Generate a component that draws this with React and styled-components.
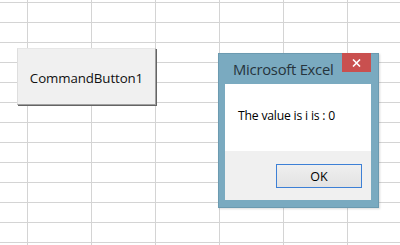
import React from "react";
import styled, { createGlobalStyle } from "styled-components";

const Global = createGlobalStyle`
  html, body { margin: 0; padding: 0; background: #ffffff; }
  body { font-family: "Open Sans", "Noto Sans", "Liberation Sans", sans-serif; }
`;

const Sheet = styled.div`
  position: relative;
  width: 400px;
  height: 245px;
  overflow: hidden;
  background-color: #ffffff;
  background-image:
    linear-gradient(to right, #d4d4d4 1px, transparent 1px),
    linear-gradient(to bottom, #d4d4d4 1px, transparent 1px);
  background-size: 64px 20px;
  background-position: 27px 2px;
`;

const CommandButton = styled.button`
  position: absolute;
  left: 17px;
  top: 48px;
  width: 139px;
  height: 57px;
  box-sizing: border-box;
  margin: 0;
  padding: 0;
  background: #f0f0f0;
  border-top: 1px solid #e6e6e6;
  border-left: 1px solid #dedede;
  border-right: 1px solid #a0a0a0;
  border-bottom: 1px solid #a0a0a0;
  box-shadow: 1px 1px 0 #646464;
  font-family: "Open Sans", "Noto Sans", sans-serif;
  font-size: 13.3px;
  color: #111;
  display: flex;
  align-items: center;
  justify-content: center;
  padding-top: 2px;
  letter-spacing: -0.1px;
`;

const Dialog = styled.div`
  position: absolute;
  left: 218px;
  top: 53px;
  width: 161px;
  height: 155px;
  box-sizing: border-box;
  background: #7aaac0;
  border: 1px solid #6b9ab0;
  display: flex;
  flex-direction: column;
  padding: 0 7px 7px 6px;
  box-shadow: 1px 1px 2px rgba(0,0,0,0.15);
`;

const TitleBar = styled.div`
  height: 30px;
  display: flex;
  align-items: flex-start;
  justify-content: space-between;
  flex-shrink: 0;
`;

const Title = styled.div`
  font-family: "Open Sans", "Noto Sans", sans-serif;
  font-size: 14.8px;
  color: #26343d;
  margin-left: 8px;
  margin-top: 5px;
  letter-spacing: -0.25px;
`;

const CloseBox = styled.div`
  width: 29px;
  height: 19px;
  margin-top: -1px;
  background: #c9504f;
  display: flex;
  align-items: center;
  justify-content: center;
`;

const Client = styled.div`
  flex: 1;
  display: flex;
  flex-direction: column;
`;

const Body = styled.div`
  height: 67px;
  background: #ffffff;
  box-sizing: border-box;
  padding: 23px 0 0 13px;
  font-family: "Open Sans", "Noto Sans", sans-serif;
  font-size: 12.2px;
  color: #000;
  letter-spacing: -0.2px;
`;

const Footer = styled.div`
  flex: 1;
  background: #f0f0f0;
  display: flex;
  justify-content: flex-end;
  align-items: flex-start;
  padding: 13px 9px 0 0;
`;

const OkButton = styled.button`
  width: 86px;
  height: 24px;
  box-sizing: border-box;
  margin: 0;
  padding: 0;
  border: 1px solid #3d80d6;
  background: linear-gradient(#efefef, #e3e3e3);
  font-family: "Open Sans", "Noto Sans", sans-serif;
  font-size: 12.5px;
  color: #000;
  display: flex;
  align-items: center;
  justify-content: center;
`;

export default function App() {
  return (
    <>
      <Global />
      <Sheet>
        <CommandButton>CommandButton1</CommandButton>
        <Dialog>
          <TitleBar>
            <Title>Microsoft Excel</Title>
            <CloseBox>
              <svg width="9" height="8" viewBox="0 0 9 8">
                <path d="M1 0.5 L8 7.5 M8 0.5 L1 7.5" stroke="#ffffff" strokeWidth="1.6" fill="none" />
              </svg>
            </CloseBox>
          </TitleBar>
          <Client>
            <Body>The value is i is : 0</Body>
            <Footer>
              <OkButton>OK</OkButton>
            </Footer>
          </Client>
        </Dialog>
      </Sheet>
    </>
  );
}
